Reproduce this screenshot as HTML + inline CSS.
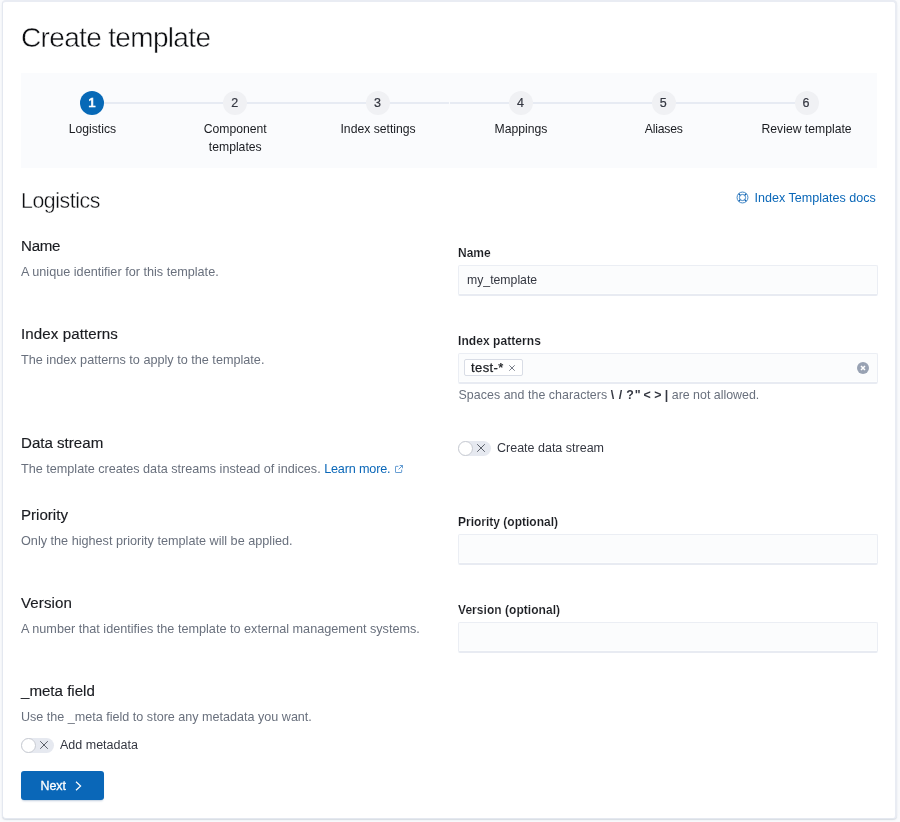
<!DOCTYPE html>
<html lang="en">
<head>
<meta charset="utf-8">
<title>Create template</title>
<style>
*{box-sizing:border-box;margin:0;padding:0}
html,body{width:900px;height:822px;overflow:hidden;background:#fafbfd;font-family:"Liberation Sans",sans-serif;color:#343741}
#root{position:absolute;left:0;top:0;width:900px;height:822px;will-change:transform}
.panel{position:absolute;left:2px;top:0;width:895px;height:819px;background:#fff;border:1px solid #e4e8f0;border-width:2px 2px 1px 1px;border-top-color:#e9ecf3;border-right-color:#e9ecf3;border-radius:4px;box-shadow:0 1px 1px 0 rgba(152,162,179,.28),0 1px 4px -2px rgba(152,162,179,.3)}
h1{position:absolute;left:21px;top:20px;-webkit-text-stroke:.45px #fff;font-size:28px;line-height:36px;font-weight:400;color:#0d0e11;letter-spacing:-0.66px;white-space:nowrap}
.steps{position:absolute;left:21px;top:73px;width:856px;height:95px;background:#fafbfd}
.step{position:absolute;top:0;width:142.83px;height:95px;text-align:center}
.step .line{position:absolute;top:29px;height:2px;background:#e7ebf3}
.step .num{position:absolute;left:50%;top:18px;margin-left:-12px;width:24px;height:24px;border-radius:50%;background:#f0f1f4;color:#343741;-webkit-text-stroke:.2px #343741;font-size:12.5px;line-height:24px;text-align:center;padding-right:1px}
.step.cur .num{background:#0769b7;color:#fff;font-weight:400;font-size:13.5px;-webkit-text-stroke:.7px #fff}
.step .lbl{position:absolute;left:0;right:0;top:47px;font-size:12.2px;line-height:18px;color:#1a1c21}
h2{position:absolute;left:21px;top:187px;-webkit-text-stroke:.36px #fff;font-size:21.3px;line-height:28px;font-weight:400;color:#0d0e11;letter-spacing:-0.42px;white-space:nowrap}
.doc{position:absolute;left:737px;top:189px;font-size:12.55px;line-height:18px;color:#0a67b8;white-space:nowrap}
.doc svg{position:absolute;left:-.9px;top:2.3px}
.doc a{position:absolute;left:17.6px;top:0}
.t{position:absolute;left:21px;font-size:15.1px;line-height:20px;color:#1a1c21;white-space:nowrap;-webkit-text-stroke:.15px #1a1c21}
.d{position:absolute;left:21px;font-size:12.67px;line-height:18px;color:#69707d;white-space:nowrap}
.l{position:absolute;left:458px;font-size:12px;line-height:16px;color:#1a1c21;font-weight:700;white-space:nowrap;-webkit-text-stroke:.12px #fff}
.in{position:absolute;left:458px;width:420px;height:31px;background:#fbfcfd;border:1px solid #ebeef4;border-bottom:2px solid #e8ebf2;border-radius:2px;font-size:12.25px;line-height:28px;padding-left:8px;color:#343741;box-shadow:inset 0 -1px 0 rgba(255,255,255,.6)}
a{color:#0a67b8;text-decoration:none}
.sw{position:absolute;width:33px;height:15px}
.sw .body{position:absolute;left:0;top:0;width:32.5px;height:15px;border-radius:7.5px;background:#e6e9f0}
.sw .thumb{position:absolute;left:0;top:0;width:15px;height:15px;border-radius:50%;background:#fff;border:1px solid #c8cbd2}
.sw svg{position:absolute;left:19px;top:3.3px}
.swl{position:absolute;font-size:12.5px;line-height:18px;color:#343741;white-space:nowrap}
.btn{position:absolute;left:21px;top:771px;width:83px;height:29px;border-radius:3px;background:#0a67b8;color:#fff;font-size:12.4px;line-height:29px;box-shadow:0 2px 2px -1px rgba(39,87,142,.3)}
.btn span{position:absolute;left:19.5px;top:1px;-webkit-text-stroke:.3px #fff}
.btn svg{position:absolute;left:54px;top:9.5px}
.badge{position:absolute;left:464px;top:359px;width:59px;height:17px;border:1px solid #d9dde6;border-radius:2px;background:#fff}
.bt{position:absolute;left:471px;top:359px;font-size:13px;letter-spacing:.4px;line-height:18px;color:#1a1c21;white-space:nowrap;-webkit-text-stroke:.25px #1a1c21}
</style>
</head>
<body>
<div id="root">
<div class="panel"></div>
<h1>Create template</h1>
<div class="steps">
  <div class="step cur" style="left:0"><div class="line" style="left:50%;right:0"></div><div class="num">1</div><div class="lbl">Logistics</div></div>
  <div class="step" style="left:142.83px"><div class="line" style="left:0;right:0"></div><div class="num">2</div><div class="lbl">Component<br>templates</div></div>
  <div class="step" style="left:285.67px"><div class="line" style="left:0;right:0"></div><div class="num">3</div><div class="lbl">Index settings</div></div>
  <div class="step" style="left:428.5px"><div class="line" style="left:0;right:0"></div><div class="num">4</div><div class="lbl">Mappings</div></div>
  <div class="step" style="left:571.33px"><div class="line" style="left:0;right:0"></div><div class="num">5</div><div class="lbl" style="letter-spacing:-.19px">Aliases</div></div>
  <div class="step" style="left:714.17px"><div class="line" style="left:0;right:50%"></div><div class="num">6</div><div class="lbl">Review template</div></div>
</div>
<h2>Logistics</h2>
<div class="doc"><svg width="13" height="13" viewBox="0 0 13 13" fill="none" stroke="#2b79c0" stroke-width=".9"><circle cx="6.5" cy="6.5" r="5.45"/><circle cx="6.5" cy="6.5" r="3.1"/><path d="M2.65 2.65l1.65 1.65M10.35 2.65L8.7 4.3M2.65 10.35l1.65-1.65M10.35 10.35L8.7 8.7" stroke="#0a5cad" stroke-width="1.2"/></svg><a>Index Templates docs</a></div>

<div class="t" style="top:236px;letter-spacing:-.25px">Name</div>
<div class="d" style="top:263px">A unique identifier for this template.</div>
<div class="l" style="top:245px">Name</div>
<div class="in" style="top:265px">my_template</div>

<div class="t" style="top:324px;letter-spacing:.09px">Index patterns</div>
<div class="d" style="top:351px">The index patterns to apply to the template.</div>
<div class="l" style="top:333px;letter-spacing:.07px">Index patterns</div>
<div class="in" style="top:353px"></div>
<div class="badge"></div><div class="bt">test-*</div>
<svg style="position:absolute;left:509px;top:365.2px" width="6" height="6" viewBox="0 0 6 6" stroke="#5f6673" stroke-width="0.85" fill="none"><path d="M0.3 0.3l5.4 5.4M5.7 0.3l-5.4 5.4"/></svg>
<svg style="position:absolute;left:857px;top:362px" width="12" height="12" viewBox="0 0 12 12"><circle cx="6" cy="6" r="6" fill="#98a2b3"/><path d="M4 4l4 4M8 4l-4 4" stroke="#fff" stroke-width="1.5" fill="none"/></svg>
<div class="d" style="left:458.5px;top:386px;font-size:12.4px"><span style="letter-spacing:.054px">Spaces and the characters </span><b style="color:#343741">\<span style="margin-left:1.2px"> /</span><span style="margin-left:.6px"> ?</span><span style="margin-left:-2.6px"> "</span><span style="margin-left:-.6px"> &lt;</span> &gt; |</b> are not allowed.</div>

<div class="t" style="top:433px">Data stream</div>
<div class="d" style="top:460px;font-size:12.64px">The template creates data streams instead of indices. <a style="letter-spacing:-.17px">Learn more.</a></div>
<svg style="position:absolute;left:394.8px;top:465px" width="8" height="8" viewBox="0 0 9 9" fill="none" stroke="#4a8ccb" stroke-width="1"><path d="M3.8 1.5H1.2a.7.7 0 0 0-.7.7v5.6a.7.7 0 0 0 .7.7h5.6a.7.7 0 0 0 .7-.7V5.2M5.3.5h3.2v3.2M8.3.7L4 5"/></svg>
<div class="sw" style="left:458px;top:441px"><div class="body"></div><div class="thumb"></div><svg width="8" height="8" viewBox="0 0 8 8" stroke="#535862" stroke-width="0.95" fill="none"><path d="M0.2 0.2l7.6 7.6M7.8 0.2l-7.6 7.6"/></svg></div>
<div class="swl" style="left:497px;top:439px">Create data stream</div>

<div class="t" style="top:505px">Priority</div>
<div class="d" style="top:532px">Only the highest priority template will be applied.</div>
<div class="l" style="top:514px">Priority (optional)</div>
<div class="in" style="top:534px"></div>

<div class="t" style="top:593px;letter-spacing:.09px">Version</div>
<div class="d" style="top:620px">A number that identifies the template to external management systems.</div>
<div class="l" style="top:602px;letter-spacing:.04px">Version (optional)</div>
<div class="in" style="top:622px"></div>

<div class="t" style="top:681px">_meta field</div>
<div class="d" style="top:708px;font-size:12.58px">Use the _meta field to store any metadata you want.</div>
<div class="sw" style="left:21px;top:738px"><div class="body"></div><div class="thumb"></div><svg width="8" height="8" viewBox="0 0 8 8" stroke="#535862" stroke-width="0.95" fill="none"><path d="M0.2 0.2l7.6 7.6M7.8 0.2l-7.6 7.6"/></svg></div>
<div class="swl" style="left:60px;top:735.5px">Add metadata</div>

<div class="btn"><span>Next</span><svg width="7" height="10" viewBox="0 0 7 10" fill="none" stroke="#fff" stroke-width="1.2"><path d="M1 0.8l4.6 4.2L1 9.2"/></svg></div>
</div>
</body>
</html>
